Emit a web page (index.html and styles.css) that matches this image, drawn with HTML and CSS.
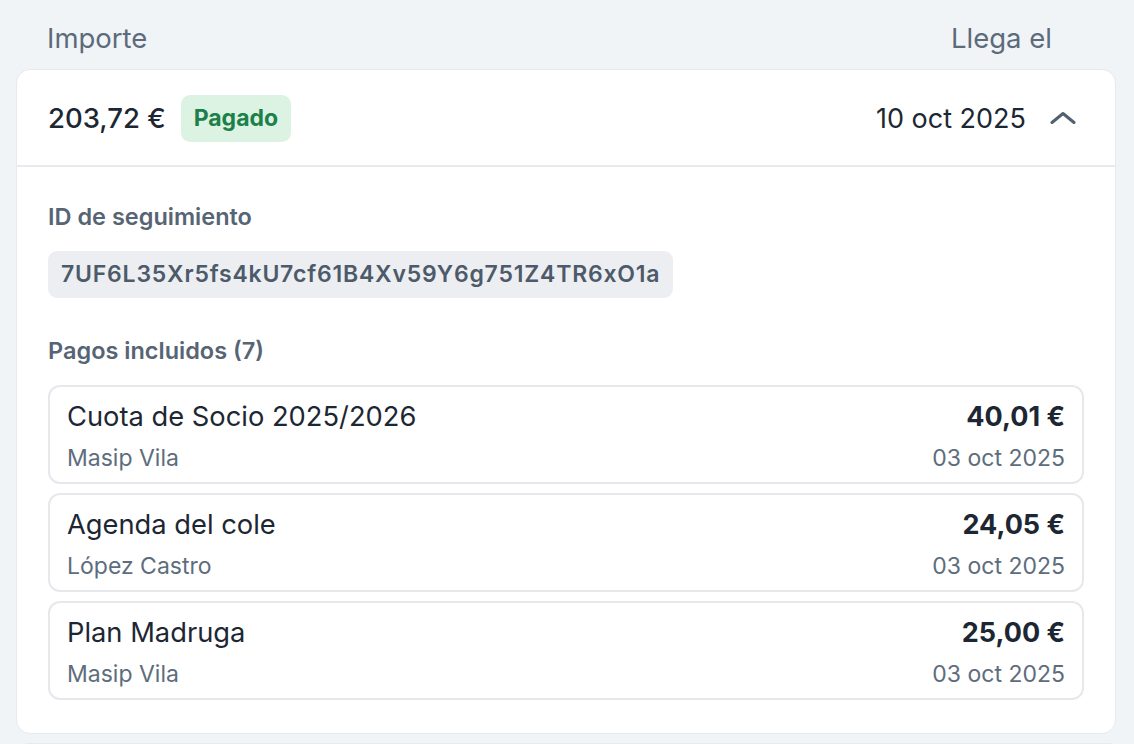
FILE: index.html
```html
<!DOCTYPE html>
<html lang="es">
<head>
<meta charset="utf-8">
<title>Pagos</title>
<link rel="stylesheet" href="styles.css">
</head>
<body>
<div class="cols">
  <span>Importe</span>
  <span>Llega el</span>
</div>
<section class="card">
  <header class="card-head">
    <div class="head-left">
      <span class="amount">203,72 €</span>
      <span class="badge">Pagado</span>
    </div>
    <div class="head-right">
      <span class="date">10 oct 2025</span>
      <svg class="chev" width="26" height="14" viewBox="0 0 26 14"><path d="M2 11.5 L13 2.5 L24 11.5" fill="none" stroke="#526070" stroke-width="3" stroke-linecap="round" stroke-linejoin="round"/></svg>
    </div>
  </header>
  <div class="card-body">
    <div class="label">ID de seguimiento</div>
    <div class="idpill">7UF6L35Xr5fs4kU7cf61B4Xv59Y6g751Z4TR6xO1a</div>
    <div class="label label-pagos">Pagos incluidos (7)</div>
    <ul class="items">
      <li class="item">
        <div class="row"><span class="title">Cuota de Socio 2025/2026</span><span class="price">40,01 €</span></div>
        <div class="row sub"><span>Masip Vila</span><span>03 oct 2025</span></div>
      </li>
      <li class="item">
        <div class="row"><span class="title">Agenda del cole</span><span class="price">24,05 €</span></div>
        <div class="row sub"><span>López Castro</span><span>03 oct 2025</span></div>
      </li>
      <li class="item">
        <div class="row"><span class="title">Plan Madruga</span><span class="price">25,00 €</span></div>
        <div class="row sub"><span>Masip Vila</span><span>03 oct 2025</span></div>
      </li>
    </ul>
  </div>
</section>
<section class="card next"></section>
</body>
</html>
```
FILE: styles.css
```css
html, body {
  margin: 0;
  padding: 0;
}
body {
  background: #f1f4f7;
  font-family: Inter, "Noto Sans", sans-serif;
  color: #1d2733;
  padding: 0 18px 0 16px;
  overflow: hidden;
  height: 744px;
  box-sizing: border-box;
}
.cols {
  display: flex;
  justify-content: space-between;
  align-items: center;
  height: 69px;
  padding: 6px 64px 0 31px;
  box-sizing: border-box;
  font-size: 27.5px;
  color: #5b6b7b;
}
.card {
  background: #fff;
  border: 1px solid #e6e9ed;
  border-radius: 14px;
}
.card-head {
  height: 97px;
  box-sizing: border-box;
  display: flex;
  align-items: center;
  justify-content: space-between;
  padding: 1px 39px 0 31px;
  border-bottom: 2px solid #e8eaee;
}
.head-left, .head-right {
  display: flex;
  align-items: center;
}
.amount {
  font-size: 27.5px;
  font-weight: 500;
}
.badge {
  margin-left: 15px;
  height: 47px;
  line-height: 47px;
  padding: 0 13px;
  border-radius: 9px;
  background: #dcf3e3;
  color: #1d8049;
  font-weight: 700;
  font-size: 23px;
}
.date {
  font-size: 27px;
  margin-right: 24px;
}
.chev {
  display: block;
}
.card-body {
  padding: 36px 31px 33px 31px;
}
.label {
  font-weight: 600;
  font-size: 23.5px;
  line-height: 28px;
  color: #566474;
}
.idpill {
  display: inline-block;
  margin-top: 20px;
  height: 47px;
  line-height: 47px;
  padding: 0 13px;
  background: #eceef1;
  border-radius: 9px;
  font-weight: 600;
  font-size: 23px;
  letter-spacing: 0.8px;
  color: #4c5a6a;
}
.label-pagos {
  margin-top: 39px;
}
.items {
  list-style: none;
  margin: 20px 0 0;
  padding: 0;
  display: flex;
  flex-direction: column;
  gap: 9px;
}
.item {
  height: 99px;
  box-sizing: border-box;
  border: 2px solid #e6e8ec;
  border-radius: 12px;
  padding: 12px 17px 0 17px;
}
.row {
  display: flex;
  justify-content: space-between;
  align-items: center;
  height: 34px;
}
.title {
  font-size: 27.3px;
}
.price {
  font-size: 27px;
  font-weight: 700;
}
.sub {
  margin-top: 8px;
  font-size: 23px;
  color: #5d6d7d;
}
.next {
  margin-top: 9px;
  margin-left: 6px;
  height: 10px;
}
```
